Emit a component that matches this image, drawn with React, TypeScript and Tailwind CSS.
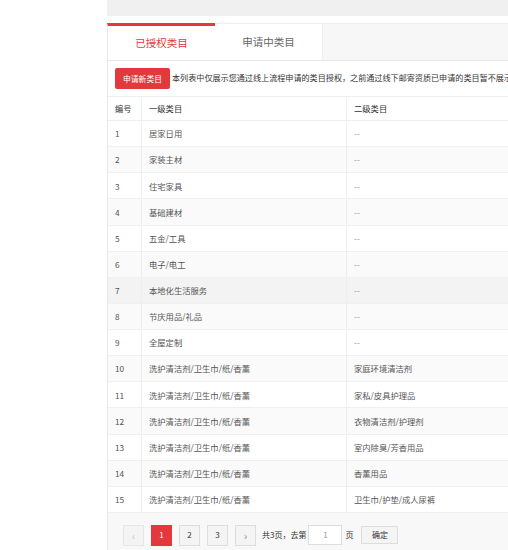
import React from 'react';

const rows: [string, string][] = [
  ['居家日用', '--'],
  ['家装主材', '--'],
  ['住宅家具', '--'],
  ['基础建材', '--'],
  ['五金/工具', '--'],
  ['电子/电工', '--'],
  ['本地化生活服务', '--'],
  ['节庆用品/礼品', '--'],
  ['全屋定制', '--'],
  ['洗护清洁剂/卫生巾/纸/香薰', '家庭环境清洁剂'],
  ['洗护清洁剂/卫生巾/纸/香薰', '家私/皮具护理品'],
  ['洗护清洁剂/卫生巾/纸/香薰', '衣物清洁剂/护理剂'],
  ['洗护清洁剂/卫生巾/纸/香薰', '室内除臭/芳香用品'],
  ['洗护清洁剂/卫生巾/纸/香薰', '香薰用品'],
  ['洗护清洁剂/卫生巾/纸/香薰', '卫生巾/护垫/成人尿裤'],
];

function App() {
  return (
    <div className="w-[508px] h-[550px] overflow-hidden flex bg-white font-['Noto_Sans_CJK_SC','Liberation_Sans',sans-serif]">
      <div className="w-[107px] shrink-0"></div>
      <div className="flex-1 min-w-0 flex flex-col">
        <div className="h-[16px] bg-[#f0f0f0]"></div>
        <div className="h-[7px]"></div>

        {/* tabs */}
        <div className="h-[37px] flex bg-[#f7f7f7] border-t border-[#eeeeee]">
          <div className="w-[108px] -mt-px bg-white border-t-[3px] border-[#e4393c] border-l border-l-[#e8e8e8] flex items-center justify-center text-[10.5px] text-[#e4393c]">
            已授权类目
          </div>
          <div className="w-[108px] bg-white border-r border-[#eeeeee] flex items-center justify-center text-[10.5px] text-[#666666]">
            申请中类目
          </div>
        </div>

        {/* panel */}
        <div className="flex-1 flex flex-col border-l border-t border-[#e8e8e8] bg-white">
          <div className="h-[35px] flex items-center pl-[7px] gap-[2px] whitespace-nowrap">
            <button
              type="button"
              className="h-[21px] w-[55px] shrink-0 rounded-[2px] bg-[#e4393c] text-white text-[7.8px]"
            >
              申请新类目
            </button>
            <span className="text-[8.1px] text-[#333333]">
              本列表中仅展示您通过线上流程申请的类目授权，之前通过线下邮寄资质已申请的类目暂不展示
            </span>
          </div>

          <div className="flex flex-col text-[8.3px]">
            <div className="h-[25px] grid grid-cols-[34px_205px_1fr] border-t border-b border-[#eeeeee] text-[#333333]">
              <div className="flex items-center pl-[7px] border-r border-[#eeeeee]">编号</div>
              <div className="flex items-center pl-[7px] border-r border-[#eeeeee]">一级类目</div>
              <div className="flex items-center pl-[7px]">二级类目</div>
            </div>
            {rows.map(([first, second], i) => (
              <div
                key={i}
                className={`h-[26.13px] grid grid-cols-[34px_205px_1fr] border-b border-[#f0f0f0] text-[#555555] ${
                  i === 6 ? 'bg-[#f3f3f3]' : i % 2 === 1 ? 'bg-[#fafafa]' : 'bg-white'
                }`}
              >
                <div className="flex items-center pl-[7px] border-r border-[#eeeeee]">{i + 1}</div>
                <div className="flex items-center pl-[7px] border-r border-[#eeeeee]">{first}</div>
                <div className={`flex items-center pl-[7px] ${second === '--' ? 'text-[#999999]' : ''}`}>
                  {second}
                </div>
              </div>
            ))}
          </div>

          {/* pagination */}
          <div className="flex-1 bg-[#f8f8f8] flex items-start pt-[12px] pl-[15px] gap-[7px] text-[8px] text-[#333333] whitespace-nowrap">
            <div className="w-[21px] h-[21px] border border-[#e6e6e6] bg-[#f4f4f4] flex items-center justify-center text-[#bbbbbb] text-[10px]">
              ‹
            </div>
            <div className="w-[21px] h-[21px] bg-[#e4393c] text-white flex items-center justify-center">1</div>
            <div className="w-[21px] h-[21px] border border-[#dddddd] bg-[#f4f4f4] flex items-center justify-center">2</div>
            <div className="w-[21px] h-[21px] border border-[#dddddd] bg-[#f4f4f4] flex items-center justify-center">3</div>
            <div className="w-[21px] h-[21px] border border-[#dddddd] bg-[#f4f4f4] flex items-center justify-center text-[#777777] text-[10px]">
              ›
            </div>
            <div className="flex items-center h-[21px] -ml-[1px]">
              <span>共3页，去第</span>
              <div className="ml-[2px] w-[34px] h-[20px] border border-[#dddddd] bg-white flex items-center justify-center text-[#999999]">
                1
              </div>
              <span className="ml-[3px]">页</span>
              <div className="ml-[8px] w-[37px] h-[18px] border border-[#dddddd] bg-[#f4f4f4] flex items-center justify-center">
                确定
              </div>
            </div>
          </div>
        </div>
      </div>
    </div>
  );
}

export default App;
